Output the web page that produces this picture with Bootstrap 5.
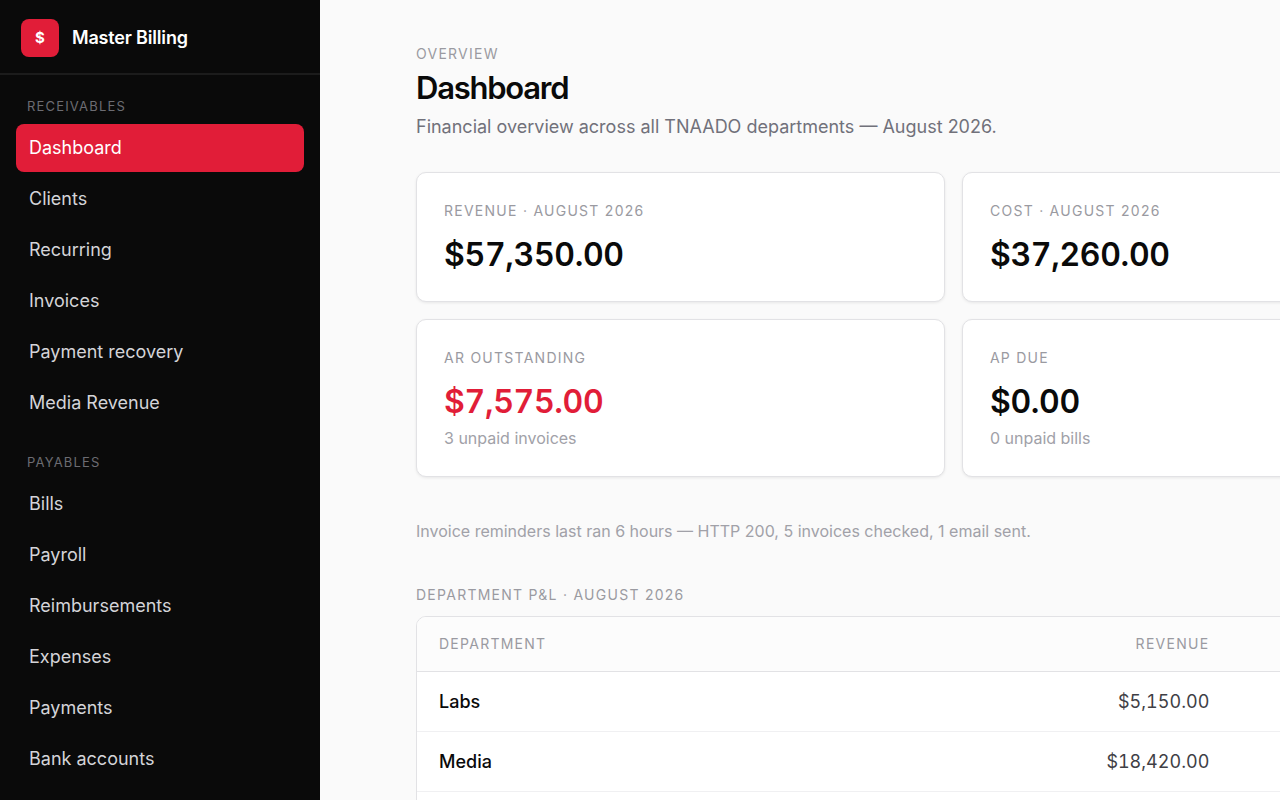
<!DOCTYPE html>
<html lang="en">
<head>
<meta charset="utf-8">
<meta name="viewport" content="width=device-width, initial-scale=1">
<title>Master Billing – Dashboard</title>
<link rel="stylesheet" href="https://cdn.jsdelivr.net/npm/bootstrap@5.3.0/dist/css/bootstrap.min.css">
<style>
  body { font-family: Inter, "Liberation Sans", sans-serif; background: #fafafa; color: #0a0a0a; font-size: 18px; line-height: 28px; }
  .shell { height: 100vh; }
  .sidebar { flex: 0 0 320px; background: #0a0a0a; }
  .brand { padding: 19px 21px 16px; gap: 13px; border-bottom: 2px solid #1c1c1c; color: #fff; font-weight: 600; }
  .brand-mark { width: 38px; height: 38px; border-radius: 8px; background: #e11d38; font-size: 15px; font-weight: 700; }
  .brand-name { font-size: 18px; letter-spacing: -0.01em; }
  .caps { font-size: 14px; line-height: 20px; font-weight: 400; letter-spacing: 0.09em; text-transform: uppercase; color: #9a9aa1; }
  .sidebar .caps { font-size: 13px; color: #6c6c72; padding: 0 11px; }
  .menu { padding: 21px 16px; gap: 25px; }
  .menu-group { gap: 3px; }
  .menu-group .caps { margin-bottom: 5px; }
  .menu .nav-link { padding: 10px 13px; border-radius: 8px; color: #d4d4d8; }
  .menu .nav-link:hover { color: #fff; }
  .menu .nav-link.active { background: #e11d38; color: #fff; }
  .content { padding: 44px 0 0 96px; }
  .page-title { font-size: 31px; line-height: 40px; font-weight: 600; letter-spacing: -0.04em; margin: 4px 0 5px; }
  .lede { color: #71717a; margin-bottom: 31px; }
  .board { width: 124.4%; }
  .stats { display: grid; grid-template-columns: 1fr 1fr; gap: 17px; }
  .stat { background: #fff; border: 1px solid #e2e2e5; border-radius: 10px; padding: 28px 27px 26px; box-shadow: 0 1px 3px rgba(0, 0, 0, .08); }
  .amount { font-size: 32px; line-height: 40px; font-weight: 600; font-variant-numeric: tabular-nums; letter-spacing: -0.01em; margin-top: 14px; }
  .note { font-size: 16px; line-height: 24px; color: #a1a1a8; }
  .stat .note { margin-top: 4px; }
  .reminder { margin: 42px 0; }
  .section-title { margin-bottom: 11px; }
  .alert-color { color: #e11d38; }
  .ledger { border: 1px solid #e2e2e5; border-radius: 10px; background: #fff; }
  .ledger .table { --bs-table-bg: transparent; table-layout: fixed; }
  .ledger th, .ledger td { padding: 16px 22px 15px; border-color: #f0f0f2; }
  .ledger thead th { padding: 17px 22px; border-bottom: 1px solid #e2e2e5; background: #fcfcfc; }
  .ledger tbody th { font-weight: 500; color: #0a0a0a; }
  .ledger td { color: #3f3f46; font-variant-numeric: tabular-nums; }
  .col-name { width: 38%; }
  .col-revenue { width: 37.9%; }
</style>
</head>
<body>
<div class="shell d-flex overflow-hidden">
  <aside class="sidebar overflow-hidden">
    <div class="brand d-flex align-items-center">
      <span class="brand-mark d-flex align-items-center justify-content-center">$</span>
      <span class="brand-name">Master Billing</span>
    </div>
    <nav class="menu d-flex flex-column" aria-label="Main">
      <div class="menu-group nav flex-column">
        <div class="caps">Receivables</div>
        <a class="nav-link active" aria-current="page" href="#">Dashboard</a>
        <a class="nav-link" href="#">Clients</a>
        <a class="nav-link" href="#">Recurring</a>
        <a class="nav-link" href="#">Invoices</a>
        <a class="nav-link" href="#">Payment recovery</a>
        <a class="nav-link" href="#">Media Revenue</a>
      </div>
      <div class="menu-group nav flex-column">
        <div class="caps">Payables</div>
        <a class="nav-link" href="#">Bills</a>
        <a class="nav-link" href="#">Payroll</a>
        <a class="nav-link" href="#">Reimbursements</a>
        <a class="nav-link" href="#">Expenses</a>
        <a class="nav-link" href="#">Payments</a>
        <a class="nav-link" href="#">Bank accounts</a>
      </div>
    </nav>
  </aside>
  <main class="content flex-grow-1 overflow-hidden">
    <div class="board">
      <header>
        <div class="caps">Overview</div>
        <h1 class="page-title">Dashboard</h1>
        <p class="lede">Financial overview across all TNAADO departments — August 2026.</p>
      </header>
      <section class="stats">
        <div class="stat">
          <div class="caps">Revenue · August 2026</div>
          <div class="amount">$57,350.00</div>
        </div>
        <div class="stat">
          <div class="caps">Cost · August 2026</div>
          <div class="amount">$37,260.00</div>
        </div>
        <div class="stat">
          <div class="caps">AR outstanding</div>
          <div class="amount alert-color">$7,575.00</div>
          <div class="note">3 unpaid invoices</div>
        </div>
        <div class="stat">
          <div class="caps">AP due</div>
          <div class="amount">$0.00</div>
          <div class="note">0 unpaid bills</div>
        </div>
      </section>
      <p class="note reminder">Invoice reminders last ran 6 hours — HTTP 200, 5 invoices checked, 1 email sent.</p>
      <h2 class="caps section-title">Department P&amp;L · August 2026</h2>
      <div class="ledger overflow-hidden">
        <table class="table mb-0">
          <thead>
            <tr>
              <th class="caps col-name" scope="col">Department</th>
              <th class="caps col-revenue text-end" scope="col">Revenue</th>
              <th class="caps text-end" scope="col"></th>
            </tr>
          </thead>
          <tbody>
            <tr><th scope="row">Labs</th><td class="text-end">$5,150.00</td><td></td></tr>
            <tr><th scope="row">Media</th><td class="text-end">$18,420.00</td><td></td></tr>
            <tr><th scope="row"></th><td></td><td></td></tr>
          </tbody>
        </table>
      </div>
    </div>
  </main>
</div>
<script src="https://cdn.jsdelivr.net/npm/bootstrap@5.3.0/dist/js/bootstrap.bundle.min.js"></script>
</body>
</html>
